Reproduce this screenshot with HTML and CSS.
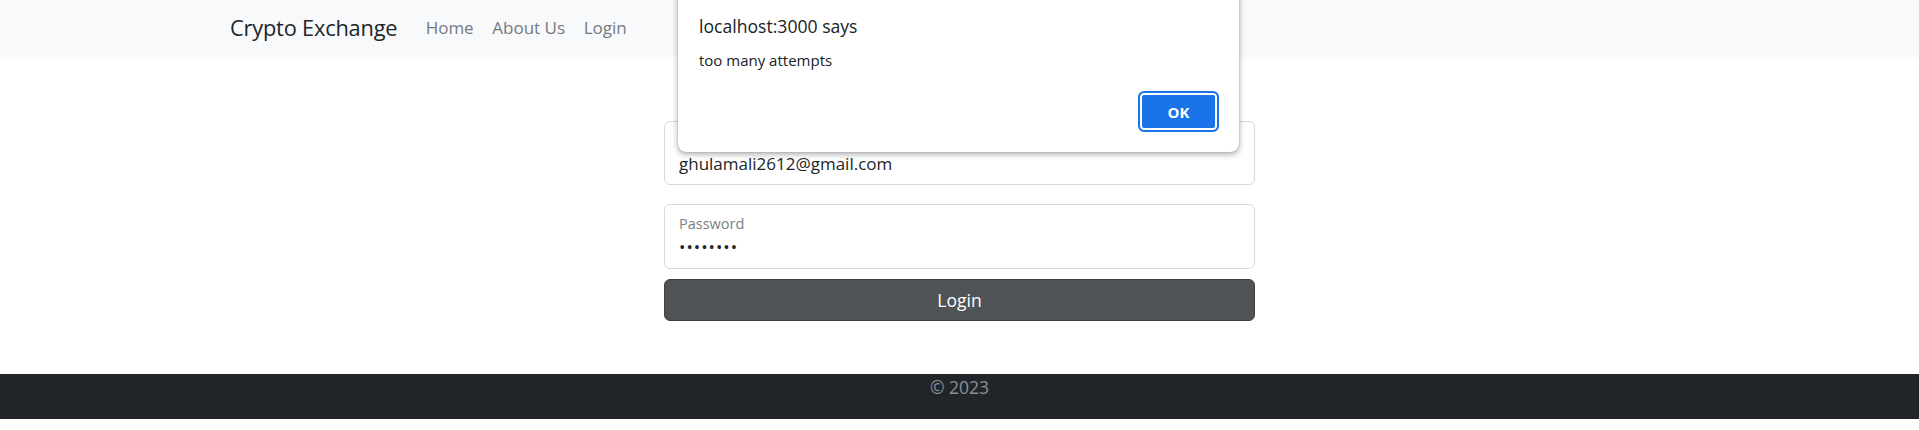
FILE: index.html
```html
<!DOCTYPE html>
<html lang="en">
<head>
<meta charset="utf-8">
<title>Crypto Exchange</title>
<link rel="stylesheet" href="styles.css">
</head>
<body>
<nav class="navbar">
  <a class="brand" href="#">Crypto Exchange</a>
  <div class="nav-links">
    <a class="nav-link" href="#">Home</a>
    <a class="nav-link" href="#">About Us</a>
    <a class="nav-link" href="#">Login</a>
  </div>
</nav>

<main class="page">
  <form class="login-form">
    <div class="field field-email">
      <span class="field-label">Email address</span>
      <span class="field-value">ghulamali2612@gmail.com</span>
    </div>
    <div class="field field-password">
      <span class="field-label">Password</span>
      <span class="field-value dots">••••••••</span>
    </div>
    <button type="button" class="btn-login">Login</button>
  </form>
</main>

<footer class="footer">
  <span class="footer-text">© 2023</span>
</footer>

<div class="alert-dialog">
  <div class="alert-title">localhost:3000 says</div>
  <div class="alert-message">too many attempts</div>
  <div class="alert-actions">
    <button type="button" class="alert-ok">OK</button>
  </div>
</div>
</body>
</html>
```

FILE: styles.css
```css
* { box-sizing: border-box; }

html, body {
  margin: 0;
  padding: 0;
  background: #ffffff;
  font-family: "Segoe UI", "Open Sans", "Noto Sans", sans-serif;
  color: #212529;
}

.navbar {
  height: 57px;
  background: #f8f9fa;
  display: flex;
  align-items: center;
  padding-left: 230px;
  padding-bottom: 3px;
}

.brand {
  font-size: 21.8px;
  color: #212529;
  text-decoration: none;
  margin-right: 19px;
  letter-spacing: -0.2px;
}

.nav-links {
  display: flex;
  align-items: center;
}

.nav-link {
  font-size: 17px;
  color: #757a7f;
  text-decoration: none;
  padding: 0 9.3px;
}

.page {
  display: flex;
  justify-content: center;
  padding-top: 64px;
  padding-bottom: 53px;
}

.login-form {
  width: 591px;
  display: flex;
  flex-direction: column;
}

.field {
  height: 64px;
  border: 1px solid #d6dade;
  border-radius: 6px;
  padding: 8px 14px 0 14px;
  display: flex;
  flex-direction: column;
  background: #fff;
}

.field-email {
  justify-content: flex-end;
  padding-bottom: 8px;
}

.field-email .field-label { display: none; }

.field-password {
  margin-top: 19px;
  height: 65px;
  padding-top: 10px;
}

.field-label {
  font-size: 14.5px;
  color: #7a7f84;
  line-height: 18px;
}

.field-value {
  font-size: 17px;
  color: #212529;
  line-height: 24px;
}

.dots {
  font-size: 17px;
  letter-spacing: 1px;
  line-height: 22px;
  margin-top: 3px;
}

.btn-login {
  margin-top: 10px;
  height: 42px;
  border: 1px solid #3f4245;
  border-radius: 6px;
  background: #4f5356;
  color: #ffffff;
  font-family: inherit;
  font-size: 17.5px;
  padding: 0;
}

.footer {
  height: 45px;
  background: #212529;
  display: flex;
  justify-content: center;
  padding-top: 1px;
}

.footer-text {
  color: #8a9096;
  font-size: 17.5px;
  line-height: 24px;
}

.alert-dialog {
  position: absolute;
  left: 678px;
  top: -12px;
  width: 561px;
  height: 164px;
  background: #ffffff;
  border-radius: 8px;
  box-shadow: 0 2px 6px rgba(0,0,0,0.35), 0 0 1px rgba(0,0,0,0.4);
  padding: 26px 20px 0 21px;
}

.alert-title {
  font-size: 17.6px;
  line-height: 24px;
  color: #202124;
}

.alert-message {
  font-size: 15px;
  line-height: 20px;
  color: #202124;
  margin-top: 12px;
}

.alert-actions {
  display: flex;
  justify-content: flex-end;
  margin-top: 21px;
}

.alert-ok {
  width: 81px;
  height: 41px;
  background: #1a73e8;
  border: 2px solid #1a73e8;
  box-shadow: inset 0 0 0 2px #ffffff;
  border-radius: 6px;
  color: #ffffff;
  font-family: "Segoe UI", "Open Sans", "Noto Sans", sans-serif;
  font-weight: 700;
  font-size: 15px;
  padding: 0;
}
```
